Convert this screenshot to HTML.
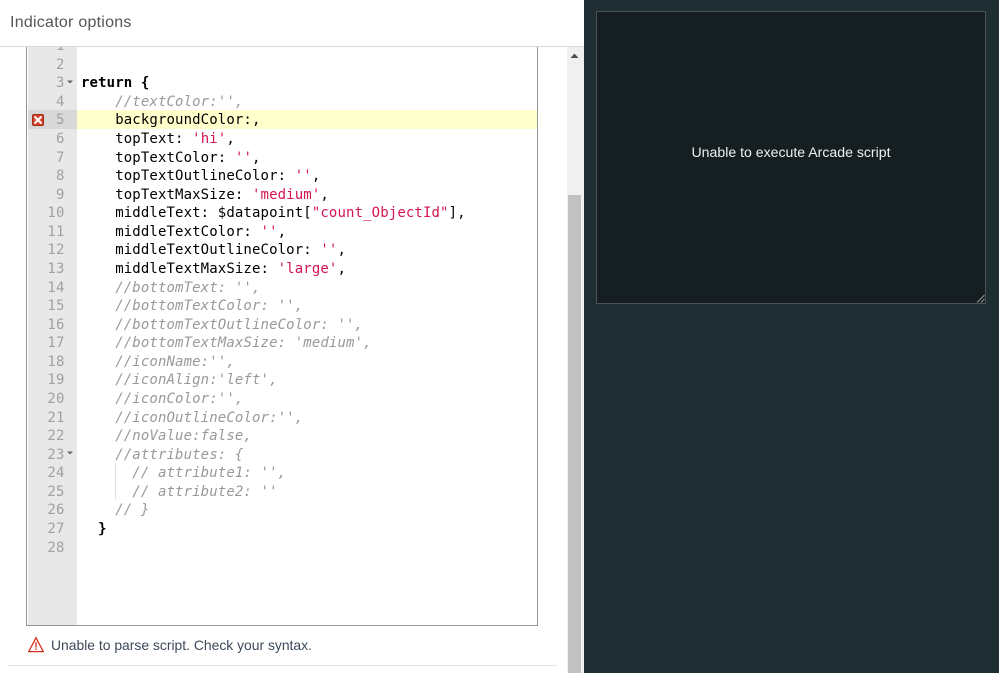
<!DOCTYPE html>
<html><head><meta charset="utf-8"><style>
*{box-sizing:border-box}
html,body{margin:0;padding:0;width:999px;height:673px;overflow:hidden;background:#fff}
body{position:relative;font-family:"Liberation Sans",sans-serif}
.abs{position:absolute}
.code{position:absolute;left:81px;top:1px;font:14px/18.56px "DejaVu Sans Mono",monospace;letter-spacing:.12px;white-space:pre;color:#000}
.l{position:absolute;left:0;height:18.56px}
.n{position:absolute;left:28px;width:36.5px;margin-top:1px;text-align:right;font:14px/18.56px "DejaVu Sans Mono",monospace;letter-spacing:.12px;color:#a0a0a0;height:18.56px}
.c{color:#999;font-style:italic}.s{color:#d5134f}.b{font-weight:bold}
</style></head><body>
<div class="abs" style="left:0;top:0;width:584px;height:47px;background:#fff;border-bottom:1px solid #d9d9d9"></div>
<div class="abs" style="left:10px;top:13px;font-size:16px;line-height:20px;color:#555;letter-spacing:.25px;white-space:nowrap">Indicator options</div>

<div class="abs" style="left:26px;top:47px;width:512px;height:579px;border:1px solid #959595;border-top:0;background:#fff"></div>
<div class="abs" style="left:28px;top:47px;width:49px;height:578px;background:#e8e8e8"></div>
<div class="abs" style="left:28px;top:110px;width:49px;height:19px;background:#d8d8d8"></div>
<div class="abs" style="left:77px;top:110px;width:460px;height:19px;background:#ffffcc"></div>
<div class="abs" style="left:32px;top:114px;width:12px;height:12px;background:#d9432b;border:1px solid #9c2a17;border-radius:2px"><svg width="10" height="10" viewBox="0 0 10 10" style="display:block"><path d="M1.5 1.5L8.5 8.5M8.5 1.5L1.5 8.5" stroke="#fff" stroke-width="2"/></svg></div>
<div class="abs" style="left:115px;top:463px;width:1px;height:37px;background:#e0e0e0"></div>

<div class="abs" style="left:28px;top:47px;width:509px;height:578px;overflow:hidden">
<div class="abs" style="left:-28px;top:-47px;width:999px;height:673px">
<div class="n" style="top:36.2px">1</div>
<div class="n" style="top:54.7px">2</div>
<div class="n" style="top:73.3px">3</div>
<div class="n" style="top:91.9px">4</div>
<div class="n" style="top:110.4px">5</div>
<div class="n" style="top:129px">6</div>
<div class="n" style="top:147.6px">7</div>
<div class="n" style="top:166.1px">8</div>
<div class="n" style="top:184.7px">9</div>
<div class="n" style="top:203.3px">10</div>
<div class="n" style="top:221.8px">11</div>
<div class="n" style="top:240.4px">12</div>
<div class="n" style="top:259px">13</div>
<div class="n" style="top:277.5px">14</div>
<div class="n" style="top:296.1px">15</div>
<div class="n" style="top:314.7px">16</div>
<div class="n" style="top:333.2px">17</div>
<div class="n" style="top:351.8px">18</div>
<div class="n" style="top:370.4px">19</div>
<div class="n" style="top:388.9px">20</div>
<div class="n" style="top:407.5px">21</div>
<div class="n" style="top:426.1px">22</div>
<div class="n" style="top:444.6px">23</div>
<div class="n" style="top:463.2px">24</div>
<div class="n" style="top:481.8px">25</div>
<div class="n" style="top:500.3px">26</div>
<div class="n" style="top:518.9px">27</div>
<div class="n" style="top:537.5px">28</div>
<div class="code">
<div class="l b" style="top:73.3px">return {</div>
<div class="l c" style="top:91.9px">    //textColor:'',</div>
<div class="l" style="top:110.4px">    backgroundColor:,</div>
<div class="l" style="top:129px">    topText: <span class="s">'hi'</span>,</div>
<div class="l" style="top:147.6px">    topTextColor: <span class="s">''</span>,</div>
<div class="l" style="top:166.1px">    topTextOutlineColor: <span class="s">''</span>,</div>
<div class="l" style="top:184.7px">    topTextMaxSize: <span class="s">'medium'</span>,</div>
<div class="l" style="top:203.3px">    middleText: $datapoint[<span class="s">"count_ObjectId"</span>],</div>
<div class="l" style="top:221.8px">    middleTextColor: <span class="s">''</span>,</div>
<div class="l" style="top:240.4px">    middleTextOutlineColor: <span class="s">''</span>,</div>
<div class="l" style="top:259px">    middleTextMaxSize: <span class="s">'large'</span>,</div>
<div class="l c" style="top:277.5px">    //bottomText: '',</div>
<div class="l c" style="top:296.1px">    //bottomTextColor: '',</div>
<div class="l c" style="top:314.7px">    //bottomTextOutlineColor: '',</div>
<div class="l c" style="top:333.2px">    //bottomTextMaxSize: 'medium',</div>
<div class="l c" style="top:351.8px">    //iconName:'',</div>
<div class="l c" style="top:370.4px">    //iconAlign:'left',</div>
<div class="l c" style="top:388.9px">    //iconColor:'',</div>
<div class="l c" style="top:407.5px">    //iconOutlineColor:'',</div>
<div class="l c" style="top:426.1px">    //noValue:false,</div>
<div class="l c" style="top:444.6px">    //attributes: {</div>
<div class="l c" style="top:463.2px">      // attribute1: '',</div>
<div class="l c" style="top:481.8px">      // attribute2: ''</div>
<div class="l c" style="top:500.3px">    // }</div>
<div class="l b" style="top:518.9px">  }</div>
</div>
</div>
</div>
<svg class="abs" style="left:66px;top:79px" width="8" height="6"><path d="M1 1.5H7L4 4.5Z" fill="#666"/></svg>
<svg class="abs" style="left:66px;top:450px" width="8" height="6"><path d="M1 1.5H7L4 4.5Z" fill="#666"/></svg>

<svg class="abs" style="left:27px;top:636px" width="18" height="18" viewBox="0 0 18 18"><path d="M9 1.8L16.3 15.6H1.7Z" fill="none" stroke="#d83020" stroke-width="1.3"/><path d="M9 6V11.5M9 12.4V14" stroke="#d83020" stroke-width="1.3"/></svg>
<div class="abs" style="left:51px;top:635px;font-size:13.9px;line-height:20px;color:#3c4a5a;white-space:nowrap">Unable to parse script. Check your syntax.</div>
<div class="abs" style="left:8px;top:665px;width:549px;height:1px;background:#e3e3e3"></div>

<div class="abs" style="left:567px;top:47px;width:17px;height:626px;background:#f0f0f0"></div>
<div class="abs" style="left:568px;top:195px;width:13px;height:478px;background:#c1c1c1"></div>
<svg class="abs" style="left:570px;top:53px" width="9" height="6"><path d="M4.5 0.5L8.5 5H.5Z" fill="#505050"/></svg>

<div class="abs" style="left:584px;top:0;width:415px;height:673px;background:#1f2e33"></div>
<div class="abs" style="left:596px;top:11px;width:390px;height:293px;background:#151e20;border:1px solid #4a5255"></div>
<svg class="abs" style="left:974px;top:292px" width="12" height="12"><path d="M10.5 3L3 10.5M10.5 7L7 10.5" stroke="#8a8f90" stroke-width="1.2"/></svg>
<div class="abs" style="left:596px;top:142px;width:390px;text-align:center;font-size:14.1px;line-height:20px;color:#f0f0f0;white-space:nowrap">Unable to execute Arcade script</div>
</body></html>
